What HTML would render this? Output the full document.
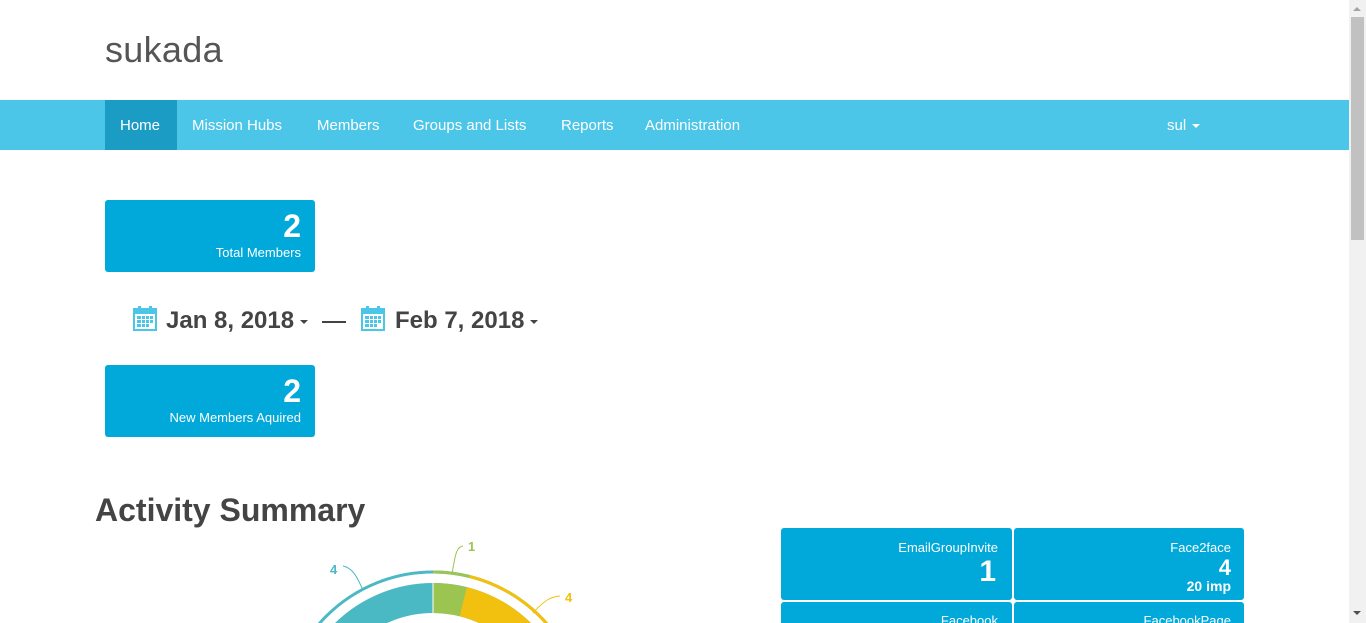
<!DOCTYPE html>
<html style="overflow:hidden;height:623px"><head><style>
body{margin:0;width:1366px;height:623px;overflow:hidden;background:#fff;font-family:"Liberation Sans",sans-serif;position:relative}
.brand{position:absolute;left:105px;top:29px;font-size:36px;color:#555;letter-spacing:0.3px}
.nav{position:absolute;left:0;top:100px;width:1349px;height:50px;background:#4bc6e8}
.nav a{position:absolute;top:0;height:50px;line-height:52px;color:#fff;font-size:15px;text-decoration:none}
.box{position:absolute;background:#00a9d9;color:#fff;border-radius:3px;text-align:right}
.tile{position:absolute;background:#00a9d9;color:#fff;border-radius:3px;text-align:right;width:231px;height:72px}
.caret{display:inline-block;border-left:4px solid transparent;border-right:4px solid transparent;border-top:4px solid currentColor;vertical-align:middle;margin-left:6px}
.date{position:absolute;top:307px;font-size:24px;font-weight:bold;color:#444}
</style></head><body>
<div class="brand">sukada</div>
<div class="nav">
<div style="position:absolute;left:105px;top:0;width:72px;height:50px;background:#1a9cc4"></div>
<a style="left:120px">Home</a><a style="left:192px">Mission Hubs</a><a style="left:317px">Members</a><a style="left:413px">Groups and Lists</a><a style="left:561px">Reports</a><a style="left:645px">Administration</a>
<a style="left:1167px">sul<span class="caret"></span></a>
</div>
<div class="box" style="left:105px;top:200px;width:210px;height:72px"><div style="position:absolute;right:14px;top:8px;font-size:32px;font-weight:bold">2</div><div style="position:absolute;right:14px;top:45px;font-size:13px">Total Members</div></div>
<div class="box" style="left:105px;top:365px;width:210px;height:72px"><div style="position:absolute;right:14px;top:8px;font-size:32px;font-weight:bold">2</div><div style="position:absolute;right:14px;top:45px;font-size:13px">New Members Aquired</div></div>
<svg style="position:absolute;left:133px;top:305px" width="24" height="26" viewBox="0 0 24 26"><rect x="1" y="4" width="22" height="21" fill="none" stroke="#4bc6e8" stroke-width="2"/><rect x="1" y="4" width="22" height="5" fill="#4bc6e8"/><rect x="5" y="1" width="3" height="5" fill="#4bc6e8"/><rect x="16" y="1" width="3" height="5" fill="#4bc6e8"/><g fill="#4bc6e8"><rect x="4" y="11" width="4" height="3"/><rect x="9" y="11" width="3" height="3"/><rect x="13" y="11" width="3" height="3"/><rect x="17" y="11" width="3" height="3"/><rect x="4" y="15" width="4" height="3"/><rect x="9" y="15" width="3" height="3"/><rect x="13" y="15" width="3" height="3"/><rect x="17" y="15" width="3" height="3"/><rect x="4" y="19" width="4" height="3"/><rect x="9" y="19" width="3" height="3"/><rect x="13" y="19" width="3" height="3"/></g></svg>
<div class="date" style="left:166px">Jan 8, 2018<span class="caret" style="color:#444"></span></div>
<div style="position:absolute;left:322px;top:321px;width:24px;height:2px;background:#444"></div>
<svg style="position:absolute;left:361px;top:305px" width="24" height="26" viewBox="0 0 24 26"><rect x="1" y="4" width="22" height="21" fill="none" stroke="#4bc6e8" stroke-width="2"/><rect x="1" y="4" width="22" height="5" fill="#4bc6e8"/><rect x="5" y="1" width="3" height="5" fill="#4bc6e8"/><rect x="16" y="1" width="3" height="5" fill="#4bc6e8"/><g fill="#4bc6e8"><rect x="4" y="11" width="4" height="3"/><rect x="9" y="11" width="3" height="3"/><rect x="13" y="11" width="3" height="3"/><rect x="17" y="11" width="3" height="3"/><rect x="4" y="15" width="4" height="3"/><rect x="9" y="15" width="3" height="3"/><rect x="13" y="15" width="3" height="3"/><rect x="17" y="15" width="3" height="3"/><rect x="4" y="19" width="4" height="3"/><rect x="9" y="19" width="3" height="3"/><rect x="13" y="19" width="3" height="3"/></g></svg>
<div class="date" style="left:395px">Feb 7, 2018<span class="caret" style="color:#444"></span></div>
<div style="position:absolute;left:95px;top:492px;font-size:32px;font-weight:bold;color:#444">Activity Summary</div>
<svg style="position:absolute;left:0;top:0" width="760" height="623">
<g transform="rotate(-90 433 723)">
<circle cx="433" cy="723" r="125" fill="none" stroke="#4bb9c4" stroke-width="30"/>
<circle cx="433" cy="723" r="125" fill="none" stroke="#9bc450" stroke-width="30" stroke-dasharray="30.5 900"/>
<circle cx="433" cy="723" r="125" fill="none" stroke="#f2c00e" stroke-width="30" stroke-dasharray="0 30.5 111 900"/>
<circle cx="433" cy="723" r="151" fill="none" stroke="#4bb9c4" stroke-width="3"/>
<circle cx="433" cy="723" r="151" fill="none" stroke="#9bc450" stroke-width="3" stroke-dasharray="37 1100"/>
<circle cx="433" cy="723" r="151" fill="none" stroke="#f2c00e" stroke-width="3" stroke-dasharray="0 37 134 1100"/>
</g>
<line x1="433" y1="583" x2="433" y2="613" stroke="#fff" stroke-width="1"/>
<path d="M452 573 C455 560,455 547,463 546" fill="none" stroke="#9bc450"/>
<path d="M363 590 C357 577,353 568,343 566" fill="none" stroke="#4bb9c4"/>
<path d="M533 613 C545 600,550 597,560 596" fill="none" stroke="#f2c00e"/>
<text x="468" y="551" font-size="13" font-weight="bold" fill="#9bc450" font-family="Liberation Sans">1</text>
<text x="330" y="574" font-size="13" font-weight="bold" fill="#4bb9c4" font-family="Liberation Sans">4</text>
<text x="565" y="602" font-size="13" font-weight="bold" fill="#f2c00e" font-family="Liberation Sans">4</text>
</svg>
<div class="tile" style="left:781px;top:528px"><div style="position:absolute;right:14px;top:12px;font-size:13px">EmailGroupInvite</div><div style="position:absolute;right:16px;top:27px;font-size:30px;font-weight:bold">1</div></div>
<div class="tile" style="left:1014px;top:528px;width:230px"><div style="position:absolute;right:13px;top:12px;font-size:13px">Face2face</div><div style="position:absolute;right:13px;top:27px;font-size:22px;font-weight:bold">4</div><div style="position:absolute;right:13px;top:50px;font-size:14px;font-weight:bold">20 imp</div></div>
<div class="tile" style="left:781px;top:602px;height:21px;border-radius:3px 3px 0 0;overflow:hidden"><div style="position:absolute;right:14px;top:11px;font-size:13px">Facebook</div></div>
<div class="tile" style="left:1014px;top:602px;width:230px;height:21px;border-radius:3px 3px 0 0;overflow:hidden"><div style="position:absolute;right:13px;top:11px;font-size:13px">FacebookPage</div></div>
<div style="position:absolute;left:1349px;top:0;width:17px;height:623px;background:#f1f1f1"></div>
<div style="position:absolute;left:1351px;top:17px;width:13px;height:223px;background:#c1c1c1"></div>
<div style="position:absolute;left:1353px;top:7px;border-left:4px solid transparent;border-right:4px solid transparent;border-bottom:4px solid #a3a3a3"></div>
<div style="position:absolute;left:1353px;top:611px;border-left:4px solid transparent;border-right:4px solid transparent;border-top:4px solid #505050"></div>
</body></html>
